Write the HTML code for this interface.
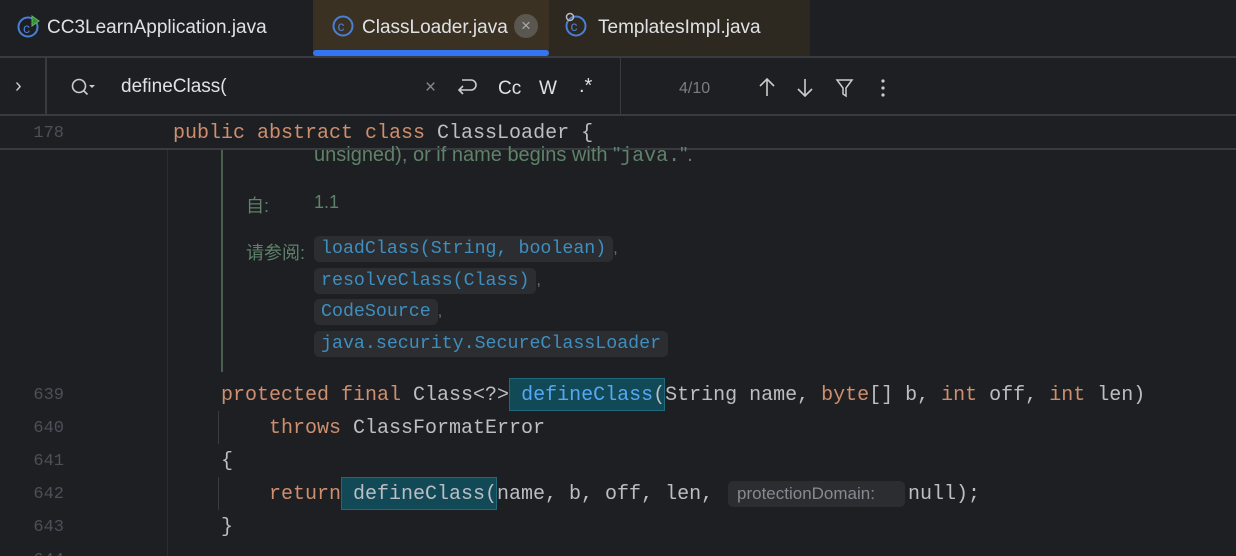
<!DOCTYPE html>
<html><head><meta charset="utf-8"><style>
*{margin:0;padding:0;box-sizing:border-box}
html,body{width:1236px;height:556px;overflow:hidden}
body{background:#1e1f22;position:relative;font-family:"Liberation Sans","Noto Sans CJK SC",sans-serif;color:#dfe1e5}
.a{position:absolute}
.tab{position:absolute;top:0;height:56px;font-size:19px;line-height:56px;color:#dfe1e5}
.mono{font-family:"Liberation Mono",monospace;font-size:20px;white-space:pre}
.k{color:#cf8e6d}.t{color:#bcbec4}
.ln{position:absolute;left:0;width:64px;text-align:right;color:#4b5059;font-family:"Liberation Mono",monospace;font-size:17px}
.box{position:absolute;background:#114957;border:1px solid #1f6a7a}
.link{background:#2b2d30;border-radius:5px;padding:3px 7px;color:#3e8fc0;font-family:"Liberation Mono",monospace;font-size:18.3px}
</style></head><body>
<div class="a" style="left:313px;top:0;width:236px;height:56px;background:#3a3122"></div>
<div class="a" style="left:549px;top:0;width:261px;height:56px;background:#2d2820"></div>
<div class="a" style="left:313px;top:50px;width:236px;height:6px;background:#3574f0;border-radius:3px"></div>
<div class="a" style="left:0;top:56px;width:1236px;height:2px;background:#393b40"></div>
<svg class="a" style="left:16px;top:13px" width="26" height="26"><circle cx="12" cy="14" r="9.5" fill="none" stroke="#4b7fd6" stroke-width="2"/><text x="7" y="20" font-size="14" fill="#4b7fd6" font-family="Liberation Sans">c</text><path d="M16 3l7 5-7 5z" fill="#3c8a3c" stroke="#5fb85f"/></svg>
<div class="tab" style="left:47px">CC3LearnApplication.java</div>
<svg class="a" style="left:331px;top:14px" width="24" height="24"><circle cx="12" cy="12" r="9.5" fill="none" stroke="#4b7fd6" stroke-width="2"/><text x="6.5" y="17" font-size="14" fill="#4b7fd6" font-family="Liberation Sans">c</text></svg>
<div class="tab" style="left:362px">ClassLoader.java</div>
<div class="a" style="left:514px;top:14px;width:24px;height:24px;border-radius:12px;background:#5a5650;color:#aaa;font-size:17px;text-align:center;line-height:23px">×</div>
<svg class="a" style="left:563px;top:11px" width="28" height="28"><circle cx="13" cy="15" r="9.5" fill="none" stroke="#4b7fd6" stroke-width="2"/><text x="7.5" y="20" font-size="14" fill="#4b7fd6" font-family="Liberation Sans">c</text><circle cx="7" cy="6" r="3.5" fill="none" stroke="#bbb" stroke-width="1.5"/></svg>
<div class="tab" style="left:598px">TemplatesImpl.java</div>
<div class="a" style="left:45px;top:58px;width:2px;height:57px;background:#393b40"></div>
<div class="a" style="left:620px;top:58px;width:1px;height:57px;background:#393b40"></div>
<div class="a" style="left:0;top:114px;width:1236px;height:2px;background:#393b40"></div>
<div class="a" style="left:15px;top:75px;font-size:20px;color:#ccc">›</div>
<svg class="a" style="left:70px;top:77px" width="28" height="22"><circle cx="9" cy="9" r="6.5" fill="none" stroke="#ccc" stroke-width="1.6"/><path d="M13.5 13.5l4 4" stroke="#ccc" stroke-width="1.6"/><path d="M19 8h6l-3 3z" fill="#ccc"/></svg>
<div class="a" style="left:121px;top:76px;font-size:19px;color:#dfe1e5">defineClass(</div>
<div class="a" style="left:425px;top:77px;font-size:19px;color:#888">×</div>
<svg class="a" style="left:454px;top:76px" width="26" height="24"><path d="M8 4h9a5 5 0 0 1 0 10H5M9 10l-4 4 4 4" fill="none" stroke="#ccc" stroke-width="1.6"/></svg>
<div class="a" style="left:498px;top:78px;font-size:19px;color:#dfe1e5">Cc</div>
<div class="a" style="left:539px;top:78px;font-size:19px;color:#dfe1e5">W</div>
<div class="a" style="left:579px;top:75px;font-size:20px;color:#dfe1e5">.*</div>
<div class="a" style="left:679px;top:80px;font-size:16px;color:#7b7e85">4/10</div>
<svg class="a" style="left:756px;top:76px" width="140" height="24"><path d="M11 3v17M4 10l7-7 7 7" fill="none" stroke="#ccc" stroke-width="1.6"/><path d="M49 3v17M42 13l7 7 7-7" fill="none" stroke="#ccc" stroke-width="1.6"/><path d="M81 4h15l-6 8v8l-3-2v-6z" fill="none" stroke="#ccc" stroke-width="1.5"/><circle cx="127" cy="5" r="1.6" fill="#ccc"/><circle cx="127" cy="12" r="1.6" fill="#ccc"/><circle cx="127" cy="19" r="1.6" fill="#ccc"/></svg>
<div class="a" style="left:167px;top:149px;width:1px;height:407px;background:#2b2d30"></div>
<div class="a" style="left:0;top:148px;width:1236px;height:2px;background:#393b40"></div>
<div class="ln" style="top:124px">178</div>
<div class="a mono" style="left:173px;top:122px"><span class="k">public abstract class </span><span class="t">ClassLoader {</span></div>
<div class="a" style="left:221px;top:150px;width:2px;height:222px;background:#4a5f4e"></div>
<div class="a" style="left:314px;top:144px;font-size:20px;color:#5f826b;white-space:nowrap;overflow:hidden;height:22px;line-height:22px">unsigned), or if name begins with "<span style="font-family:'Liberation Mono';font-size:20px">java.</span>".</div>
<div class="a" style="left:246px;top:192px;font-size:18px;color:#5f826b">自:</div>
<div class="a" style="left:314px;top:192px;font-size:18px;color:#5f826b">1.1</div>
<div class="a" style="left:246px;top:239px;font-size:18px;color:#5f826b">请参阅:</div>
<div class="a" style="left:314px;top:234px;line-height:29px;color:#6f737a;font-size:16px">
<div style="height:31.5px"><span class="link">loadClass(String, boolean)</span>,</div>
<div style="height:31.5px"><span class="link">resolveClass(Class)</span>,</div>
<div style="height:31.5px"><span class="link">CodeSource</span>,</div>
<div style="height:31.5px"><span class="link">java.security.SecureClassLoader</span></div>
</div>
<div class="a" style="left:218px;top:411px;width:1px;height:33px;background:#393b40"></div>
<div class="a" style="left:218px;top:477px;width:1px;height:33px;background:#393b40"></div>
<div class="ln" style="top:386px">639</div>
<div class="ln" style="top:419px">640</div>
<div class="ln" style="top:452px">641</div>
<div class="ln" style="top:485px">642</div>
<div class="ln" style="top:518px">643</div>
<div class="ln" style="top:551px">644</div>
<div class="box" style="left:509px;top:378px;width:156px;height:33px"></div>
<div class="box" style="left:341px;top:477px;width:156px;height:33px"></div>
<div class="a" style="left:728px;top:481px;width:177px;height:26px;background:#2b2d30;border-radius:5px"></div>
<div class="a mono" style="left:221px;top:384px"><span class="k">protected final </span><span class="t">Class&lt;?&gt; </span><span style="color:#56a8f5">defineClass</span><span class="t">(String name, </span><span class="k">byte</span><span class="t">[] b, </span><span class="k">int</span><span class="t"> off, </span><span class="k">int</span><span class="t"> len)</span></div>
<div class="a mono" style="left:269px;top:417px"><span class="k">throws </span><span class="t">ClassFormatError</span></div>
<div class="a mono t" style="left:221px;top:450px">{</div>
<div class="a mono" style="left:269px;top:483px"><span class="k">return </span><span class="t">defineClass(name, b, off, len,</span></div>
<div class="a" style="left:737px;top:484px;font-size:17px;color:#868a91">protectionDomain:</div>
<div class="a mono t" style="left:908px;top:483px">null);</div>
<div class="a mono t" style="left:221px;top:516px">}</div>
</body></html>
